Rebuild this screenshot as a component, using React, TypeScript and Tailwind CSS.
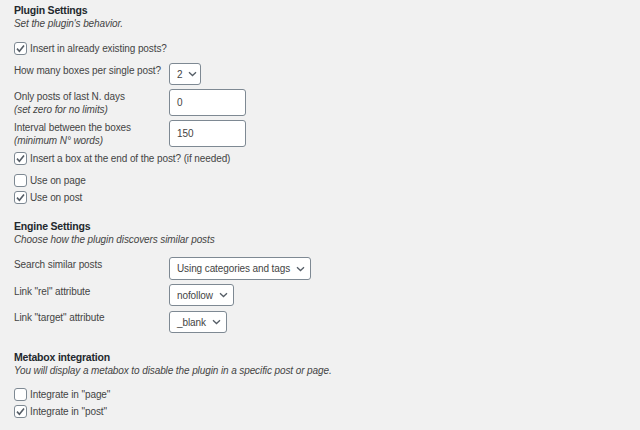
import React from "react";

const Check = ({ checked }: { checked?: boolean }) => (
  <span className="w-[13px] h-[13px] shrink-0 border border-[#7e8993] rounded-[3px] bg-white flex items-center justify-center">
    {checked && (
      <svg width="11" height="11" viewBox="0 0 11 11" fill="none">
        <path d="M2 5.6 L4.4 8.2 L9 2.6" stroke="#555d66" strokeWidth="1.6" />
      </svg>
    )}
  </span>
);

const Chevron = () => (
  <svg width="9" height="6" viewBox="0 0 9 6" fill="none" className="shrink-0">
    <path d="M1 1.2 L4.5 4.5 L8 1.2" stroke="#555d66" strokeWidth="1.3" />
  </svg>
);

function CheckRow({ label, checked, className }: { label: React.ReactNode; checked?: boolean; className: string }) {
  return (
    <label className={`flex items-center gap-[3px] h-[13px] ${className}`}>
      <Check checked={checked} />
      <span className="leading-[13px] whitespace-nowrap">{label}</span>
    </label>
  );
}

function Select({ value, className }: { value: string; className: string }) {
  return (
    <div
      className={`bg-white border border-[#7e8993] rounded-[3px] pl-[7px] pr-[5px] flex items-center gap-[6px] whitespace-nowrap ${className}`}
    >
      <span>{value}</span>
      <Chevron />
    </div>
  );
}

function Field({ value }: { value: string }) {
  return (
    <div className="w-[77px] h-full bg-white border border-[#7e8993] rounded-[3px] pl-[7px] flex items-center">
      {value}
    </div>
  );
}

function Heading({ children, className = "" }: { children: React.ReactNode; className?: string }) {
  return (
    <h3 className={`h-[13px] leading-[13px] font-bold text-[10.5px] tracking-[-0.2px] text-[#23282d] ${className}`}>
      {children}
    </h3>
  );
}

export default function App() {
  return (
    <div className="w-[640px] h-[430px] bg-[#f1f1f1] text-[#444] text-[10px] tracking-[-0.1px] font-['Liberation_Sans',Arial,sans-serif] px-[14px] pt-[4px] overflow-hidden">
      <Heading>Plugin Settings</Heading>
      <p className="h-[14px] leading-[14px] italic">Set the plugin's behavior.</p>

      <CheckRow className="mt-[11px]" checked label="Insert in already existing posts?" />

      <div className="mt-[8px] h-[22px] grid grid-cols-[155px_auto] items-start">
        <div className="pt-[1px] leading-[14px] whitespace-nowrap">How many boxes per single post?</div>
        <Select value="2" className="h-[22px] w-[32px]" />
      </div>

      <div className="mt-[4px] h-[22px] grid grid-cols-[155px_auto] items-start">
        <div className="leading-[13px] pt-[0.5px]">
          Only posts of last N. days
          <br />
          <em>(set zero for no limits)</em>
        </div>
        <Field value="0" />
      </div>

      <div className="mt-[9px] h-[23px] grid grid-cols-[155px_auto] items-start">
        <div className="leading-[13px] pt-[1px]">
          Interval between the boxes
          <br />
          <em>(minimum N° words)</em>
        </div>
        <Field value="150" />
      </div>

      <CheckRow className="mt-[9px]" checked label="Insert a box at the end of the post? (if needed)" />
      <CheckRow className="mt-[9px]" label="Use on page" />
      <CheckRow className="mt-[4px]" checked label="Use on post" />

      <Heading className="mt-[16px]">Engine Settings</Heading>
      <p className="h-[14px] leading-[14px] italic">Choose how the plugin discovers similar posts</p>

      <div className="mt-[10px] h-[23px] grid grid-cols-[155px_auto] items-start">
        <div className="pt-[1px] leading-[14px]">Search similar posts</div>
        <Select value="Using categories and tags" className="h-[23px] w-fit" />
      </div>
      <div className="mt-[4px] h-[22px] grid grid-cols-[155px_auto] items-start">
        <div className="pt-[1px] leading-[14px]">Link "rel" attribute</div>
        <Select value="nofollow" className="h-[22px] w-fit" />
      </div>
      <div className="mt-[5px] h-[22px] grid grid-cols-[155px_auto] items-start">
        <div className="leading-[14px]">Link "target" attribute</div>
        <Select value="_blank" className="h-[22px] w-fit" />
      </div>

      <Heading className="mt-[18px]">Metabox integration</Heading>
      <p className="h-[14px] leading-[14px] italic">You will display a metabox to disable the plugin in a specific post or page.</p>

      <CheckRow className="mt-[10px]" label={'Integrate in "page"'} />
      <CheckRow className="mt-[4px]" checked label={'Integrate in "post"'} />
    </div>
  );
}
